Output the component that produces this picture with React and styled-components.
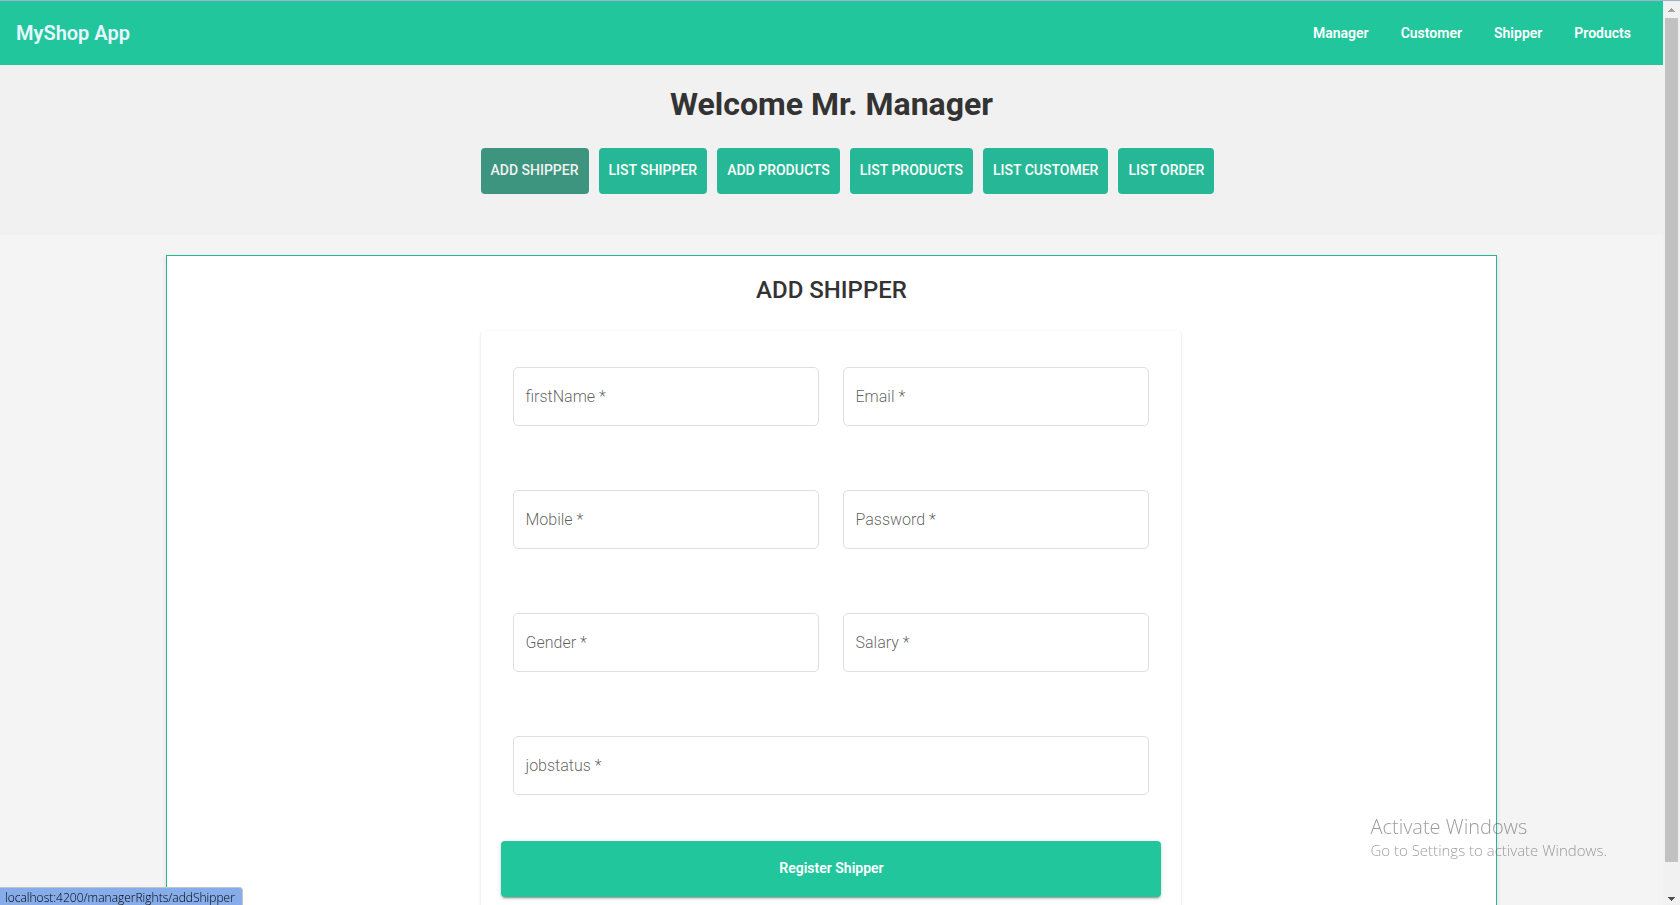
import React from "react";
import styled, { createGlobalStyle } from "styled-components";

const GlobalStyle = createGlobalStyle`
  *, *::before, *::after { box-sizing: border-box; }
  html, body { margin: 0; height: 100%; }
  body {
    font-family: Roboto, "Liberation Sans", sans-serif;
    background: #f4f4f4;
    color: #333333;
  }
`;

const Frame = styled.div`
  display: flex;
  height: 100vh;
  border-top: 1px solid #a3b1cb;
  overflow: hidden;
`;

const Page = styled.div`
  flex: 1;
  min-width: 0;
  overflow: hidden;
`;

const Toolbar = styled.header`
  display: flex;
  align-items: center;
  justify-content: space-between;
  height: 64px;
  padding: 0 16px;
  background: #22c69d;
`;

const Brand = styled.a`
  color: #e8f6ff;
  font-size: 20px;
  font-weight: 600;
  line-height: 32px;
  text-decoration: none;
`;

const TopNav = styled.nav`
  display: flex;
`;

const TopLink = styled.a`
  padding: 0 16px;
  color: #ffffff;
  font-size: 14px;
  font-weight: 600;
  line-height: 36px;
  text-decoration: none;
`;

const Hero = styled.section`
  height: 170px;
  padding-top: 19px;
  background: #f1f1f1;
`;

const Welcome = styled.h1`
  margin: 0 0 24px;
  font-size: 32px;
  font-weight: 700;
  line-height: 40px;
  text-align: center;
`;

const Actions = styled.nav`
  display: flex;
  gap: 10px;
  max-width: 702px;
  margin: 0 auto;
`;

const Action = styled.a`
  flex: none;
  height: 46px;
  padding: 0 10px;
  border-radius: 4px;
  background: ${({ $active }) => ($active ? "#3e957f" : "#26b896")};
  color: ${({ $active }) => ($active ? "#f1f1f1" : "#ffffff")};
  font-size: 14px;
  font-weight: 500;
  line-height: 44px;
  text-decoration: none;
  white-space: nowrap;
`;

const Panel = styled.main`
  width: 80%;
  min-height: 100vh;
  margin: 20px auto 0;
  padding-top: 18px;
  border: 1px solid #26b896;
  background: #ffffff;
  box-shadow: 0 2px 4px rgba(0, 0, 0, 0.12);
`;

const PanelTitle = styled.h2`
  margin: 0 0 25px;
  font-size: 24px;
  font-weight: 500;
  line-height: 32px;
  text-align: center;
`;

const Card = styled.form`
  max-width: 700px;
  margin: 0 auto;
  padding: 36px 20px 20px;
  border-radius: 4px;
  background: #ffffff;
  box-shadow: 0 2px 1px -1px rgba(0, 0, 0, 0.2), 0 1px 1px rgba(0, 0, 0, 0.14),
    0 1px 3px rgba(0, 0, 0, 0.12);
`;

const Fields = styled.div`
  display: grid;
  grid-template-columns: 1fr 1fr;
  gap: 64px 24px;
  padding: 0 12px;
`;

const FieldBox = styled.div`
  display: grid;
  grid-column: ${({ $wide }) => ($wide ? "1 / -1" : "auto")};
`;

const FieldLabel = styled.label`
  grid-area: 1 / 1;
  align-self: center;
  padding-left: 12px;
  color: rgba(0, 0, 0, 0.64);
  font-size: 16px;
  font-weight: 300;
  line-height: 20px;
  pointer-events: none;
`;

const FieldInput = styled.input`
  grid-area: 1 / 1;
  width: 100%;
  height: 59px;
  padding: 0 12px;
  border: 1px solid #dfdfdf;
  border-radius: 5px;
  background: transparent;
  font: inherit;

  &:focus + ${FieldLabel}, &:not(:placeholder-shown) + ${FieldLabel} {
    visibility: hidden;
  }
`;

const Submit = styled.button`
  width: 100%;
  height: 56px;
  margin-top: 46px;
  padding: 0 0 2px;
  border: 0;
  border-radius: 4px;
  background: #22c69d;
  color: #ffffff;
  font: 600 14px/36px Roboto, "Liberation Sans", sans-serif;
  box-shadow: 0 3px 1px -2px rgba(0, 0, 0, 0.2), 0 2px 2px rgba(0, 0, 0, 0.14),
    0 1px 5px rgba(0, 0, 0, 0.12);
`;

const ScrollRail = styled.div`
  display: flex;
  flex-direction: column;
  flex: none;
  width: 17px;
  background: #f1f1f1;
`;

const RailArrow = styled.svg`
  display: block;
  width: 17px;
  height: 17px;
  fill: ${({ $muted }) => ($muted ? "#a3a3a3" : "#505050")};
`;

const Track = styled.div`
  flex: 1;
  padding: 0 2px;
`;

const Thumb = styled.div`
  height: 97%;
  background: #c1c1c1;
`;

const Watermark = styled.aside`
  position: fixed;
  right: 73px;
  bottom: 45px;
  color: rgba(90, 90, 90, 0.6);
  font-family: "Open Sans", "Noto Sans", sans-serif;
  font-weight: 300;
  pointer-events: none;
`;

const WatermarkTitle = styled.div`
  font-size: 20px;
  line-height: 26px;
`;

const WatermarkText = styled.div`
  font-size: 15px;
  line-height: 20px;
`;

const StatusBar = styled.div`
  position: fixed;
  left: 0;
  bottom: 0;
  height: 18px;
  padding: 0 7px 0 5px;
  border-top: 1px solid #c0c4cc;
  border-right: 1px solid #c0c4cc;
  border-radius: 0 4px 0 0;
  background: #86ace9;
  color: #000000;
  font-family: "Open Sans", "Noto Sans", sans-serif;
  font-size: 12px;
  font-weight: 300;
  line-height: 20px;
`;

const topLinks = ["Manager", "Customer", "Shipper", "Products"];

const actions = [
  "ADD SHIPPER",
  "LIST SHIPPER",
  "ADD PRODUCTS",
  "LIST PRODUCTS",
  "LIST CUSTOMER",
  "LIST ORDER",
];

const fields = [
  { id: "firstName", label: "firstName", type: "text" },
  { id: "email", label: "Email", type: "email" },
  { id: "mobile", label: "Mobile", type: "tel" },
  { id: "password", label: "Password", type: "password" },
  { id: "gender", label: "Gender", type: "text" },
  { id: "salary", label: "Salary", type: "text" },
  { id: "jobstatus", label: "jobstatus", type: "text", wide: true },
];

function Field({ id, label, type, wide }) {
  return (
    <FieldBox $wide={wide}>
      <FieldInput id={id} name={id} type={type} placeholder=" " required />
      <FieldLabel htmlFor={id}>{label} *</FieldLabel>
    </FieldBox>
  );
}

export default function App() {
  return (
    <>
      <GlobalStyle />
      <Frame>
        <Page>
          <Toolbar>
            <Brand href="#home">MyShop App</Brand>
            <TopNav>
              {topLinks.map((name) => (
                <TopLink key={name} href={`#${name}`}>{name}</TopLink>
              ))}
            </TopNav>
          </Toolbar>
          <Hero>
            <Welcome>Welcome Mr. Manager</Welcome>
            <Actions>
              {actions.map((name, i) => (
                <Action key={name} href="#addShipper" $active={i === 0}>{name}</Action>
              ))}
            </Actions>
          </Hero>
          <Panel>
            <PanelTitle>ADD SHIPPER</PanelTitle>
            <Card onSubmit={(e) => e.preventDefault()}>
              <Fields>
                {fields.map((f) => <Field key={f.id} {...f} />)}
              </Fields>
              <Submit type="submit">Register Shipper</Submit>
            </Card>
          </Panel>
        </Page>
        <ScrollRail aria-hidden="true">
          <RailArrow $muted viewBox="0 0 17 17">
            <path d="M8 7h1v1h1v1h1v1h1v1H5v-1h1V9h1V8h1z" />
          </RailArrow>
          <Track><Thumb /></Track>
          <RailArrow viewBox="0 0 17 17">
            <path d="M5 9h7v1h-1v1h-1v1H9v1H8v-1H7v-1H6v-1H5z" />
          </RailArrow>
        </ScrollRail>
      </Frame>
      <Watermark>
        <WatermarkTitle>Activate Windows</WatermarkTitle>
        <WatermarkText>Go to Settings to activate Windows.</WatermarkText>
      </Watermark>
      <StatusBar>localhost:4200/managerRights/addShipper</StatusBar>
    </>
  );
}
